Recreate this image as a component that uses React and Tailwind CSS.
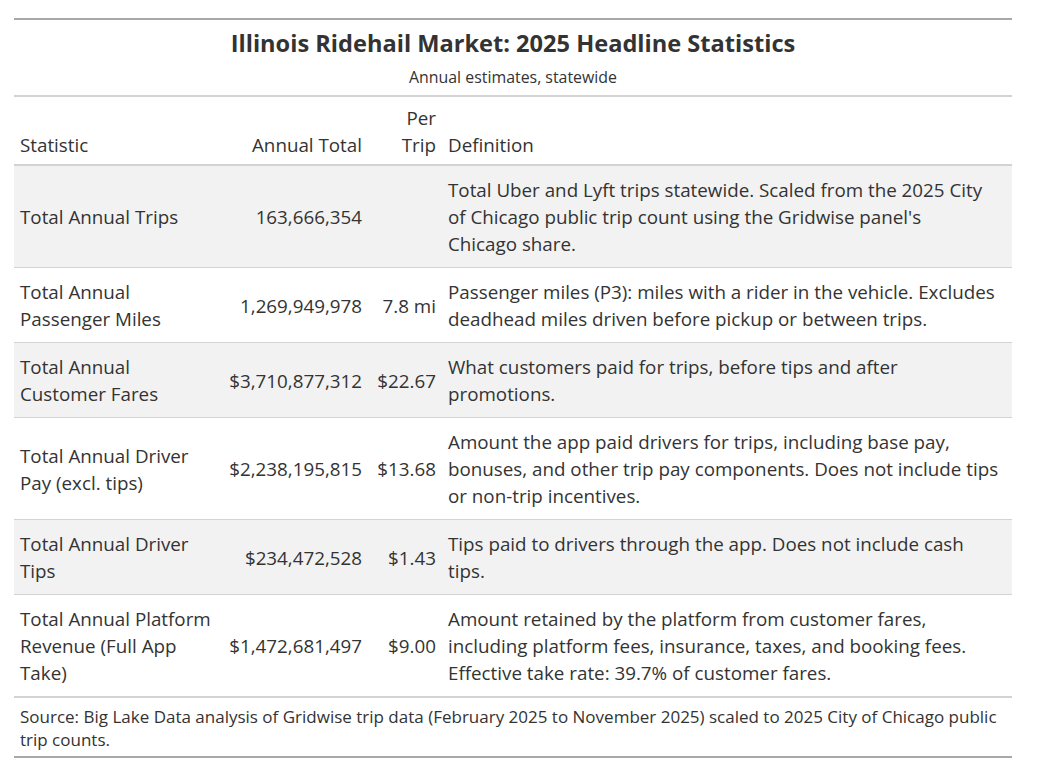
import React from "react";

const rows = [
  {
    stat: ["Total Annual Trips"],
    total: "163,666,354",
    per: "",
    def: [
      "Total Uber and Lyft trips statewide. Scaled from the 2025 City",
      "of Chicago public trip count using the Gridwise panel's",
      "Chicago share.",
    ],
    shade: true,
  },
  {
    stat: ["Total Annual", "Passenger Miles"],
    total: "1,269,949,978",
    per: "7.8 mi",
    def: [
      "Passenger miles (P3): miles with a rider in the vehicle. Excludes",
      "deadhead miles driven before pickup or between trips.",
    ],
    shade: false,
  },
  {
    stat: ["Total Annual", "Customer Fares"],
    total: "$3,710,877,312",
    per: "$22.67",
    def: [
      "What customers paid for trips, before tips and after",
      "promotions.",
    ],
    shade: true,
  },
  {
    stat: ["Total Annual Driver", "Pay (excl. tips)"],
    total: "$2,238,195,815",
    per: "$13.68",
    def: [
      "Amount the app paid drivers for trips, including base pay,",
      "bonuses, and other trip pay components. Does not include tips",
      "or non-trip incentives.",
    ],
    shade: false,
  },
  {
    stat: ["Total Annual Driver", "Tips"],
    total: "$234,472,528",
    per: "$1.43",
    def: [
      "Tips paid to drivers through the app. Does not include cash",
      "tips.",
    ],
    shade: true,
  },
  {
    stat: ["Total Annual Platform", "Revenue (Full App", "Take)"],
    total: "$1,472,681,497",
    per: "$9.00",
    def: [
      "Amount retained by the platform from customer fares,",
      "including platform fees, insurance, taxes, and booking fees.",
      "Effective take rate: 39.7% of customer fares.",
    ],
    shade: false,
  },
];

function Lines({ lines }) {
  return lines.map((l, i) => (
    <React.Fragment key={i}>
      {l}
      {i < lines.length - 1 && <br />}
    </React.Fragment>
  ));
}

export default function App() {
  return (
    <div
      className="w-[1037px] h-[771px] bg-white text-[#333333] pt-[18px] pl-[14px]"
      style={{ fontFamily: '"Open Sans", "Noto Sans", sans-serif' }}
    >
      <div className="w-[998px] border-t-2 border-b-2 border-[#a8a8a8]">
        <div className="text-center border-b-2 border-[#d3d3d3]">
          <div className="pt-[6px] text-[23.6px] leading-[34px] font-bold">
            Illinois Ridehail Market: 2025 Headline Statistics
          </div>
          <div className="pt-[6px] pb-[6px] text-[15.9px] leading-[23px]">
            Annual estimates, statewide
          </div>
        </div>
        <table className="w-full border-collapse table-fixed text-[18.8px] leading-[27px]">
          <colgroup>
            <col className="w-[206px]" />
            <col className="w-[148px]" />
            <col className="w-[74px]" />
            <col className="w-[570px]" />
          </colgroup>
          <thead>
            <tr className="border-b-2 border-[#d3d3d3]">
              <th className="font-normal text-left align-bottom px-[6px] pt-[8px] pb-[5px]">
                Statistic
              </th>
              <th className="font-normal text-right align-bottom px-[6px] pt-[8px] pb-[5px] whitespace-nowrap">
                Annual Total
              </th>
              <th className="font-normal text-right align-bottom px-[6px] pt-[8px] pb-[5px]">
                Per
                <br />
                Trip
              </th>
              <th className="font-normal text-left align-bottom px-[6px] pt-[8px] pb-[5px]">
                Definition
              </th>
            </tr>
          </thead>
          <tbody>
            {rows.map((r, i) => (
              <tr
                key={i}
                className={
                  (r.shade ? "bg-[#f2f2f2] " : "bg-white ") +
                  (i < rows.length - 1
                    ? "border-b border-[#d3d3d3]"
                    : "border-b-2 border-[#d3d3d3]")
                }
              >
                <td className="align-middle px-[6px] pt-[11px] pb-[9px] whitespace-nowrap">
                  <Lines lines={r.stat} />
                </td>
                <td className="align-middle text-right px-[6px] pt-[11px] pb-[9px] whitespace-nowrap">
                  {r.total}
                </td>
                <td className="align-middle text-right px-[6px] pt-[11px] pb-[9px] whitespace-nowrap">
                  {r.per}
                </td>
                <td className="align-middle px-[6px] pt-[11px] pb-[9px] whitespace-nowrap">
                  <Lines lines={r.def} />
                </td>
              </tr>
            ))}
          </tbody>
        </table>
        <div className="px-[6px] pt-[7px] pb-[5px] text-[17px] leading-[23px] whitespace-nowrap">
          Source: Big Lake Data analysis of Gridwise trip data (February 2025 to
          November 2025) scaled to 2025 City of Chicago public
          <br />
          trip counts.
        </div>
      </div>
    </div>
  );
}
